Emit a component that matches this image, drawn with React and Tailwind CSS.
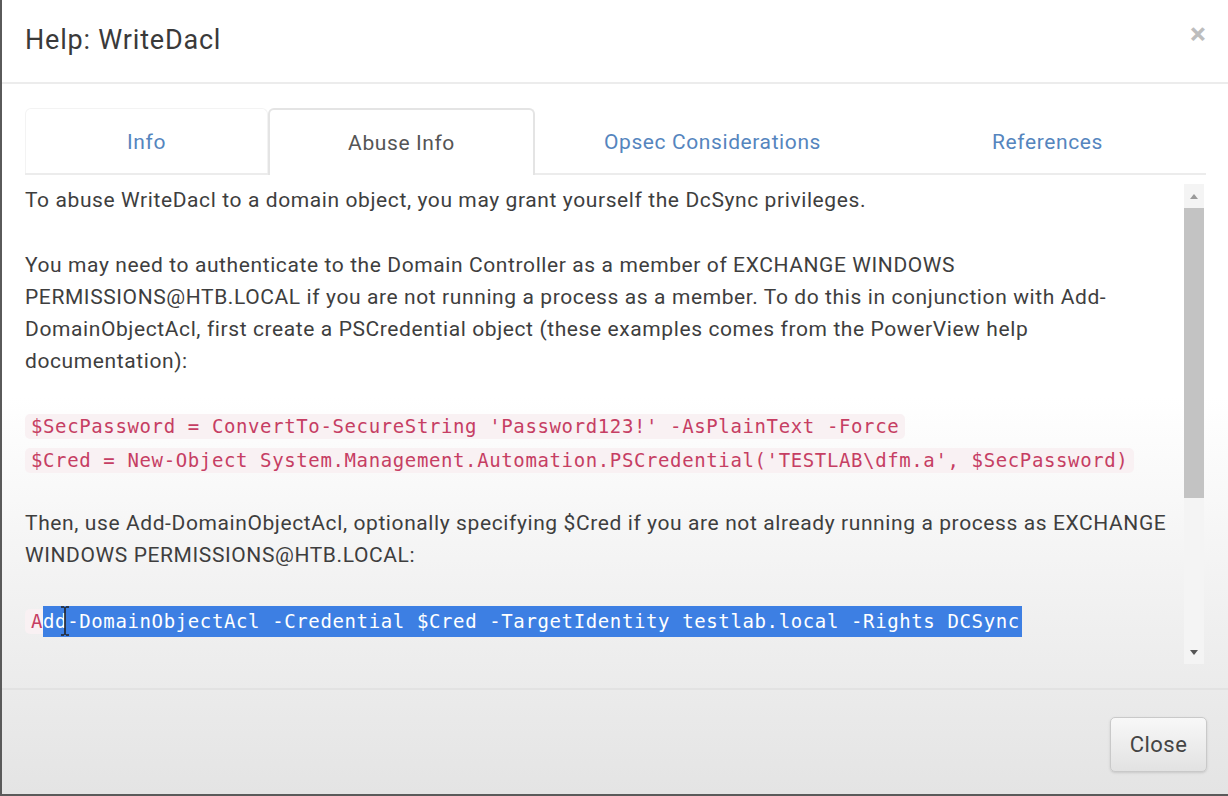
import React from "react";

const tabs = [
  { label: "Info", w: "w-[243px]" },
  { label: "Abuse Info", w: "w-[267px]", active: true },
  { label: "Opsec Considerations", w: "w-[355px]" },
  { label: "References", w: "w-[315px]" },
];

function CodeLine({ children }) {
  return (
    <div className="h-[34px] flex items-center">
      <span className="bg-[#f9f1f3] text-[#c63e63] px-[6px] py-[3px] rounded-[5px] whitespace-pre">
        {children}
      </span>
    </div>
  );
}

export default function App() {
  const sans = { fontFamily: "Roboto, 'Liberation Sans', sans-serif" };
  const mono = "font-['DejaVu_Sans_Mono','Liberation_Mono',monospace] text-[19px] tracking-[0.62px]";

  return (
    <div
      className="w-[1228px] h-[796px] flex flex-col bg-gradient-to-b from-white from-50% to-[#e4e4e4] border-l-2 border-b-2 border-[#5a5a5a] text-[#3b3b3b] overflow-hidden"
      style={sans}
    >
      {/* Header */}
      <div className="h-[84px] shrink-0 flex items-center justify-between pl-[23px] pr-[22px] border-b-2 border-[#ececec]">
        <h4 className="text-[27px] tracking-[0.8px] text-[#3a3a3a] leading-none -mt-[2px]">Help: WriteDacl</h4>
        <button className="text-[#bdbdbd] text-[30px] font-bold leading-none -mt-[14px]">×</button>
      </div>

      {/* Body */}
      <div className="flex-1 flex flex-col pl-[23px] pr-[22px] pt-[24px]">
        {/* Tabs */}
        <div className="flex h-[67px] shrink-0 border-b-2 border-[#ececec]">
          {tabs.map((t) =>
            t.active ? (
              <div
                key={t.label}
                className={`${t.w} -mb-[2px] pt-[2px] bg-white border-2 border-b-0 border-[#e4e4e4] rounded-t-[6px] flex items-center justify-center text-[21px] tracking-[0.6px] text-[#555]`}
              >
                {t.label}
              </div>
            ) : (
              <div
                key={t.label}
                className={`${t.w} pt-[4px] flex items-center justify-center text-[21px] tracking-[0.6px] text-[#5585be] ${t.label === "Info" ? "border border-b-0 border-[#f3f3f3] rounded-t-[6px]" : ""}`}
              >
                {t.label}
              </div>
            )
          )}
        </div>

        {/* Scrolling content */}
        <div className="flex h-[480px] mt-[9px]">
          <div className="flex-1 text-[21px] tracking-[0.6px] leading-[32px] text-[#3e3e3e]">
            <div>To abuse WriteDacl to a domain object, you may grant yourself the DcSync privileges.</div>
            <div className="mt-[33px]">
              <div>You may need to authenticate to the Domain Controller as a member of EXCHANGE WINDOWS</div>
              <div>PERMISSIONS@HTB.LOCAL if you are not running a process as a member. To do this in conjunction with Add-</div>
              <div>DomainObjectAcl, first create a PSCredential object (these examples comes from the PowerView help</div>
              <div>documentation):</div>
            </div>
            <div className={`mt-[32px] ${mono} leading-none`}>
              <CodeLine>$SecPassword = ConvertTo-SecureString 'Password123!' -AsPlainText -Force</CodeLine>
              <CodeLine>$Cred = New-Object System.Management.Automation.PSCredential('TESTLAB\dfm.a', $SecPassword)</CodeLine>
            </div>
            <div className="mt-[30px]">
              <div>Then, use Add-DomainObjectAcl, optionally specifying $Cred if you are not already running a process as EXCHANGE</div>
              <div>WINDOWS PERMISSIONS@HTB.LOCAL:</div>
            </div>
            <div className={`mt-[33px] ${mono} leading-none`}>
              <div className="h-[34px] flex items-center relative">
                <span className="pl-[6px] py-[3px] bg-[#f9f1f3] text-[#c63e63] rounded-l-[5px]">A</span>
                <span className="bg-[#3d7fe3] text-white py-[6px] pr-[2px] whitespace-pre">dd-DomainObjectAcl -Credential $Cred -TargetIdentity testlab.local -Rights DCSync</span>
                <svg className="absolute left-[35px] top-[2px]" width="10" height="30" viewBox="0 0 10 30">
                  <path d="M1 1h3M6 1h3M5 1v28M1 29h3M6 29h3" stroke="#222" strokeWidth="1.6" fill="none" />
                </svg>
              </div>
            </div>
          </div>

          {/* Scrollbar */}
          <div className="w-[20px] shrink-0 mr-[2px] bg-[#f4f4f4] flex flex-col items-center">
            <div className="h-[24px] flex items-center justify-center">
              <div className="w-0 h-0 border-l-[4px] border-r-[4px] border-b-[5px] border-l-transparent border-r-transparent border-b-[#9a9a9a]" />
            </div>
            <div className="w-full h-[290px] bg-[#c3c3c3]" />
            <div className="flex-1" />
            <div className="h-[24px] flex items-center justify-center">
              <div className="w-0 h-0 border-l-[4px] border-r-[4px] border-t-[5px] border-l-transparent border-r-transparent border-t-[#555]" />
            </div>
          </div>
        </div>
      </div>

      {/* Footer */}
      <div className="h-[106px] shrink-0 border-t-2 border-[#e2e2e2] flex items-center justify-end pr-[21px]">
        <button className="w-[97px] h-[55px] mt-[4px] rounded-[5px] border border-[#c9c9c9] bg-gradient-to-b from-[#f8f8f8] to-[#e2e2e2] shadow-sm text-[22px] tracking-[0.5px] text-[#444]">
          Close
        </button>
      </div>
    </div>
  );
}
